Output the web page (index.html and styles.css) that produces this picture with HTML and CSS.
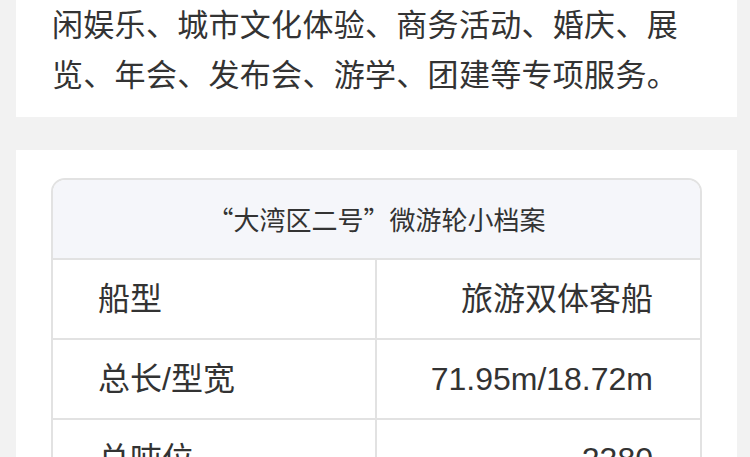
FILE: index.html
```html
<!DOCTYPE html>
<html lang="zh-CN">
<head>
    <meta charset="UTF-8">
    <meta name="viewport" content="width=device-width, initial-scale=1.0">
    <title>大湾区二号</title>
    <link rel="stylesheet" href="styles.css">
</head>
<body>
    <div class="card intro">
        <p>闲娱乐、城市文化体验、商务活动、婚庆、展览、年会、发布会、游学、团建等专项服务。</p>
    </div>

    <div class="card">
        <div class="spec">
            <div class="spec-title">“大湾区二号”微游轮小档案</div>
            <div class="spec-row">
                <div class="spec-label">船型</div>
                <div class="spec-value">旅游双体客船</div>
            </div>
            <div class="spec-row">
                <div class="spec-label">总长/型宽</div>
                <div class="spec-value">71.95m/18.72m</div>
            </div>
            <div class="spec-row">
                <div class="spec-label">总吨位</div>
                <div class="spec-value">2380</div>
            </div>
        </div>
    </div>
</body>
</html>
```

FILE: styles.css
```css
:root {
    --text: #333;
    --line: #e2e2e2;
    --bg: #f2f2f2;
}

body {
    margin: 0;
    padding: 0 13px 0 16px;
    background: var(--bg);
    font-family: 'Liberation Sans', 'Noto Sans CJK SC', sans-serif;
    color: var(--text);
}

.card {
    background: white;
    padding: 28px 35px;
    margin-bottom: 33px;
}

.intro {
    padding: 1px 30px 16px 36px;
}

.intro p {
    margin: 0;
    font-size: 31px;
    line-height: 50px;
    letter-spacing: 0.3px;
}

.spec {
    border: 2px solid var(--line);
    border-radius: 14px;
    overflow: hidden;
}

.spec-title {
    height: 78px;
    line-height: 78px;
    text-align: center;
    font-family: 'Noto Sans CJK SC', sans-serif;
    font-size: 26px;
    background: #f5f6fa;
    border-bottom: 2px solid var(--line);
}

.spec-row {
    display: grid;
    grid-template-columns: 1fr 1fr;
    border-bottom: 2px solid var(--line);
}

.spec-label,
.spec-value {
    height: 78px;
    line-height: 78px;
    font-size: 32px;
}

.spec-label {
    padding-left: 45px;
    border-right: 2px solid var(--line);
}

.spec-value {
    text-align: right;
    padding-right: 47px;
}
```
